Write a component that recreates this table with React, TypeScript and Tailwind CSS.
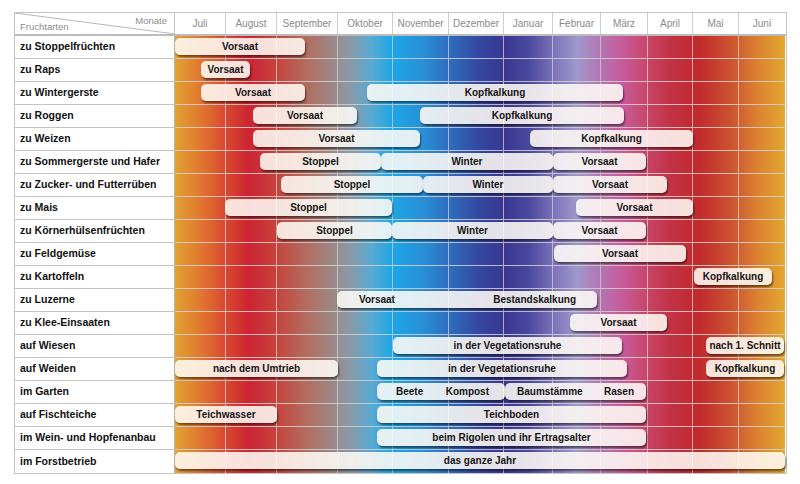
import React from "react";

const months: [string, number][] = [
  ["Juli", 51],
  ["August", 51],
  ["September", 61],
  ["Oktober", 55],
  ["November", 56],
  ["Dezember", 55],
  ["Januar", 49],
  ["Februar", 48],
  ["März", 47],
  ["April", 45],
  ["Mai", 46],
  ["Juni", 46],
];

// x positions are page pixels; the month area starts at x = 176
type Bar = { x1: number; x2: number; labels: string[]; cls?: string };
type Row = { name: string; bars: Bar[] };

const rows: Row[] = [
  { name: "zu Stoppelfrüchten", bars: [{ x1: 176, x2: 306, labels: ["Vorsaat"] }] },
  { name: "zu Raps", bars: [{ x1: 202, x2: 251, labels: ["Vorsaat"] }] },
  {
    name: "zu Wintergerste",
    bars: [
      { x1: 202, x2: 306, labels: ["Vorsaat"] },
      { x1: 368, x2: 624, labels: ["Kopfkalkung"] },
    ],
  },
  {
    name: "zu Roggen",
    bars: [
      { x1: 254, x2: 358, labels: ["Vorsaat"] },
      { x1: 421, x2: 625, labels: ["Kopfkalkung"] },
    ],
  },
  {
    name: "zu Weizen",
    bars: [
      { x1: 254, x2: 421, labels: ["Vorsaat"] },
      { x1: 531, x2: 694, labels: ["Kopfkalkung"] },
    ],
  },
  {
    name: "zu Sommergerste und Hafer",
    bars: [
      { x1: 261, x2: 382, labels: ["Stoppel"] },
      { x1: 382, x2: 554, labels: ["Winter"] },
      { x1: 554, x2: 647, labels: ["Vorsaat"] },
    ],
  },
  {
    name: "zu Zucker- und Futterrüben",
    bars: [
      { x1: 282, x2: 424, labels: ["Stoppel"] },
      { x1: 424, x2: 554, labels: ["Winter"] },
      { x1: 554, x2: 668, labels: ["Vorsaat"] },
    ],
  },
  {
    name: "zu Mais",
    bars: [
      { x1: 226, x2: 393, labels: ["Stoppel"] },
      { x1: 577, x2: 694, labels: ["Vorsaat"] },
    ],
  },
  {
    name: "zu Körnerhülsenfrüchten",
    bars: [
      { x1: 278, x2: 393, labels: ["Stoppel"] },
      { x1: 393, x2: 554, labels: ["Winter"] },
      { x1: 554, x2: 647, labels: ["Vorsaat"] },
    ],
  },
  { name: "zu Feldgemüse", bars: [{ x1: 555, x2: 687, labels: ["Vorsaat"] }] },
  { name: "zu Kartoffeln", bars: [{ x1: 695, x2: 773, labels: ["Kopfkalkung"] }] },
  {
    name: "zu Luzerne",
    bars: [
      {
        x1: 338,
        x2: 598,
        labels: ["Vorsaat", "Bestandskalkung"],
        cls: "justify-between pl-[22px] pr-[21px]",
      },
    ],
  },
  { name: "zu Klee-Einsaaten", bars: [{ x1: 571, x2: 668, labels: ["Vorsaat"] }] },
  {
    name: "auf Wiesen",
    bars: [
      { x1: 394, x2: 623, labels: ["in der Vegetationsruhe"] },
      { x1: 707, x2: 785, labels: ["nach 1. Schnitt"] },
    ],
  },
  {
    name: "auf Weiden",
    bars: [
      { x1: 176, x2: 339, labels: ["nach dem Umtrieb"] },
      { x1: 378, x2: 628, labels: ["in der Vegetationsruhe"] },
      { x1: 707, x2: 785, labels: ["Kopfkalkung"] },
    ],
  },
  {
    name: "im Garten",
    bars: [
      { x1: 378, x2: 506, labels: ["Beete", "Kompost"], cls: "justify-between pl-[19px] pr-[16px]" },
      { x1: 506, x2: 647, labels: ["Baumstämme", "Rasen"], cls: "justify-between px-[12px]" },
    ],
  },
  {
    name: "auf Fischteiche",
    bars: [
      { x1: 176, x2: 278, labels: ["Teichwasser"] },
      { x1: 378, x2: 647, labels: ["Teichboden"] },
    ],
  },
  {
    name: "im Wein- und Hopfenanbau",
    bars: [{ x1: 378, x2: 647, labels: ["beim Rigolen und ihr Ertragsalter"] }],
  },
  { name: "im Forstbetrieb", bars: [{ x1: 176, x2: 786, labels: ["das ganze Jahr"] }] },
];

const colsClass =
  "grid grid-cols-[51px_51px_61px_55px_56px_55px_49px_48px_47px_45px_46px_46px]";

const App = () => {
  return (
    <div className="w-[800px] h-[484px] overflow-hidden bg-white pt-[12px] pl-[14px] font-['Liberation_Sans',Arial,sans-serif]">
      <div className="w-[773px] border border-[#c4c4c4]">
        {/* header */}
        <div className="flex h-[23px] border-b-2 border-[#bcbcbc]">
          <div className="relative w-[160px] border-r border-[#c4c4c4] flex justify-between px-[5px] text-[9.5px] text-[#8c8c8c]">
            <svg className="absolute inset-0" width="160" height="21">
              <line x1="0" y1="0" x2="160" y2="21" stroke="#b8b8b8" strokeWidth="1" />
            </svg>
            <span className="self-end">Fruchtarten</span>
            <span className="self-start pt-[1px] pr-[2px]">Monate</span>
          </div>
          <div className={colsClass}>
            {months.map(([m], i) => (
              <div
                key={m}
                className={
                  "flex items-center justify-center text-[10px] text-[#8a8a8a] " +
                  (i < 11 ? "border-r border-[#cfcfcf]" : "")
                }
              >
                {m}
              </div>
            ))}
          </div>
        </div>

        {/* body */}
        <div className="flex">
          <div className="w-[160px] border-r border-[#b8b8b8]">
            {rows.map((r, i) => (
              <div
                key={r.name}
                className={
                  "h-[23px] flex items-center pl-[5px] text-[10.5px] font-bold text-[#111] " +
                  (i < rows.length - 1 ? "border-b border-[#c4c4c4]" : "")
                }
              >
                {r.name}
              </div>
            ))}
          </div>
          <div className="w-[610px] bg-[linear-gradient(to_right,#e2a232_0px,#e07a30_24px,#d84830_51px,#cc2432_74px,#c6443e_102px,#b46a5c_129px,#a08480_154px,#8c98a4_174px,#5aaad2_196px,#1ca6e6_218px,#2a8ed6_249px,#2e6ebe_274px,#3448a0_304px,#3a3690_329px,#4a489e_354px,#7a72b8_378px,#a098cc_402px,#b474b0_426px,#c85a98_449px,#c84466_473px,#c23244_496px,#c02a2c_524px,#cc5030_554px,#dc8430_584px,#e2a830_610px)]">
            {rows.map((r, i) => (
              <div
                key={r.name}
                className={
                  "relative h-[23px] " +
                  (i < rows.length - 1 ? "border-b border-[rgba(210,210,210,0.85)]" : "")
                }
              >
                <div className={colsClass + " h-full"}>
                  {months.map(([m], j) => (
                    <div
                      key={m}
                      className={j < 11 ? "border-r border-[rgba(210,210,210,0.75)]" : ""}
                    />
                  ))}
                </div>
                {r.bars.map((b, k) => (
                  <div
                    key={k}
                    className={
                      "absolute top-[2px] h-[17px] rounded-[5px] bg-[rgba(255,251,246,0.87)] shadow-[1px_2px_2px_rgba(0,0,0,0.5)] flex items-center text-[10px] font-bold text-[#151515] whitespace-nowrap " +
                      (b.cls ?? "justify-center")
                    }
                    style={{ left: b.x1 - 176, width: b.x2 - b.x1 }}
                  >
                    {b.labels.map((l) => (
                      <span key={l}>{l}</span>
                    ))}
                  </div>
                ))}
              </div>
            ))}
          </div>
        </div>
      </div>
    </div>
  );
};

export default App;
